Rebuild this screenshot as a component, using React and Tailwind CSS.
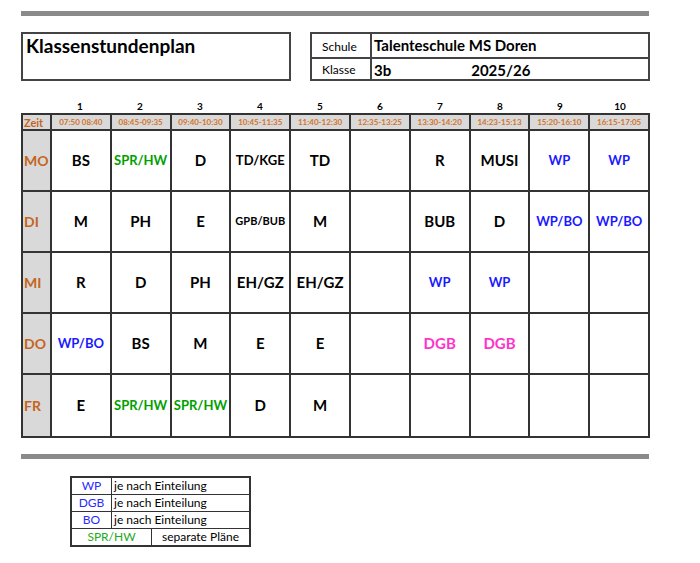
const B = "#000", BL = "#1a1aff", GR = "#00a000", PK = "#ff33cc";
const times = ["07:50 08:40","08:45-09:35","09:40-10:30","10:45-11:35","11:40-12:30","12:35-13:25","13:30-14:20","14:23-15:13","15:20-16:10","16:15-17:05"];
const rows = [
  ["MO", [["BS",B],["SPR/HW",GR,1],["D",B],["TD/KGE",B,1],["TD",B],null,["R",B],["MUSI",B],["WP",BL,1],["WP",BL,1]]],
  ["DI", [["M",B],["PH",B],["E",B],["GPB/BUB",B,2],["M",B],null,["BUB",B],["D",B],["WP/BO",BL,1],["WP/BO",BL,1]]],
  ["MI", [["R",B],["D",B],["PH",B],["EH/GZ",B],["EH/GZ",B],null,["WP",BL,1],["WP",BL,1],null,null]],
  ["DO", [["WP/BO",BL,1],["BS",B],["M",B],["E",B],["E",B],null,["DGB",PK],["DGB",PK],null,null]],
  ["FR", [["E",B],["SPR/HW",GR,1],["SPR/HW",GR,1],["D",B],["M",B],null,null,null,null,null]],
];
const sz = ["text-[15px]", "text-[13px]", "text-[11px]"];

export default function App() {
  return (
    <div className="w-[700px] h-[563px] bg-white relative" style={{ fontFamily: "Lato, 'Open Sans', sans-serif" }}>
      <div className="pt-[11px] pl-[21px]">
        <div className="w-[628px] h-[5px] bg-[#8a8a8a]" />
        <div className="flex mt-[16px] h-[49px]">
          <div className="w-[270px] border-2 border-[#444] px-[3px] text-[19px] font-bold leading-[24px]">Klassenstundenplan</div>
          <div className="ml-[19px] w-[340px] border-2 border-[#444] flex flex-col">
            <div className="flex flex-1 border-b-2 border-[#444]">
              <div className="w-[60px] border-r-2 border-[#444] text-[12px] pl-[10px] flex items-end pb-[1px]">Schule</div>
              <div className="pl-[2px] text-[15px] font-bold flex items-center">Talenteschule MS Doren</div>
            </div>
            <div className="flex flex-1">
              <div className="w-[60px] border-r-2 border-[#444] text-[12px] pl-[10px] flex items-center">Klasse</div>
              <div className="pl-[2px] text-[15px] font-bold flex items-center">3b<span className="ml-[80px]">2025/26</span></div>
            </div>
          </div>
        </div>
        <div className="mt-[18px] flex pl-[29px] h-[14px]">
          {times.map((_, i) => <div key={i} className="w-[60px] text-center text-[10px] font-bold leading-[14px]">{i + 1}</div>)}
        </div>
        <div className="w-[629px] border-2 border-[#333]">
          <div className="flex h-[16px] bg-[#d9d9d9] border-b-2 border-[#333]">
            <div className="w-[27px] text-[11px] font-bold text-[#c5651d] leading-[15px] pl-[1px]">Zeit</div>
            {times.map((t) => <div key={t} className="w-[60px] border-l-2 border-[#333] text-center text-[8px] font-bold text-[#d4732a] leading-[15px]">{t}</div>)}
          </div>
          {rows.map(([d, cells], ri) => (
            <div key={d} className={"flex h-[61px]" + (ri < 4 ? " border-b-2 border-[#333]" : "")}>
              <div className="w-[27px] bg-[#d9d9d9] text-[14px] font-bold text-[#c5651d] flex items-center pl-[1px]">{d}</div>
              {cells.map((c, i) => (
                <div key={i} className={"w-[60px] border-l-2 border-[#333] flex items-center justify-center font-bold " + (c ? sz[c[2] || 0] : "")} style={c ? { color: c[1] } : {}}>
                  {c ? c[0] : ""}
                </div>
              ))}
            </div>
          ))}
        </div>
        <div className="mt-[16px] w-[628px] h-[5px] bg-[#8a8a8a]" />
        <div className="mt-[17px] ml-[49px] w-[181px] border-2 border-[#333] text-[12px] leading-[16px]">
          {["WP", "DGB", "BO"].map((k) => (
            <div key={k} className="flex border-b border-[#333]">
              <div className="w-[40px] text-center text-[#2a2aff] border-r border-[#333]">{k}</div>
              <div className="pl-[2px]">je nach Einteilung</div>
            </div>
          ))}
          <div className="flex">
            <div className="w-[80px] text-center text-[#22aa22] border-r border-[#333]">SPR/HW</div>
            <div className="flex-1 text-center">separate Pläne</div>
          </div>
        </div>
      </div>
    </div>
  );
}
